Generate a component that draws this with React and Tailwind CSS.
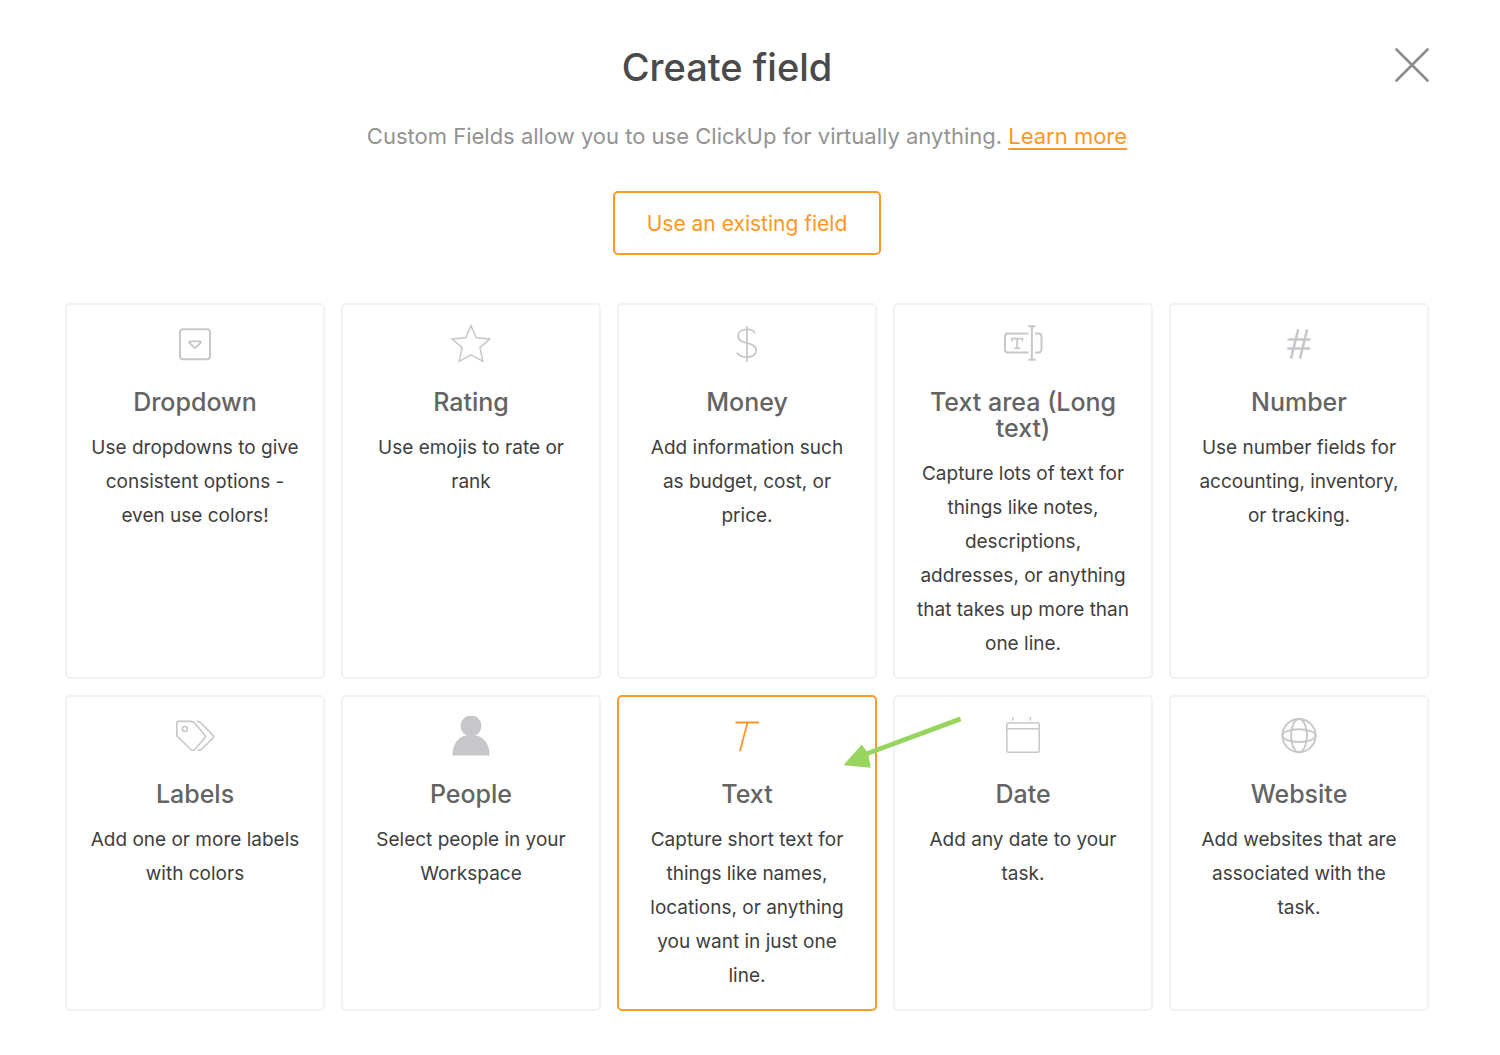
import React, { useState } from 'react'
import clsx from 'clsx'

const Icon = ({ children, strokeWidth = 2 }) => (
  <svg
    className="h-10 w-10"
    viewBox="0 0 40 40"
    fill="none"
    stroke="currentColor"
    strokeWidth={strokeWidth}
    aria-hidden="true"
  >
    {children}
  </svg>
)

const DropdownIcon = () => (
  <Icon>
    <rect x="5" y="5.2" width="30" height="30" rx="3" />
    <path d="M15 17.4h10a.8.8 0 0 1 .5 1.4l-4.3 4.4a1.6 1.6 0 0 1-2.4 0l-4.300-4.400a.8.8 0 0 1 .5-1.400z" strokeWidth="1.9" />
  </Icon>
)

const StarIcon = () => (
  <Icon strokeWidth="1.5">
    <path d="M20 1.800l5.400 12 13.400 1.200-9.900 8.600 2.900 13.800L20 30.800 8.200 37.400l2.900-13.800L1.200 15l13.400-1.200z" />
  </Icon>
)

const MoneyIcon = () => (
  <Icon strokeWidth="1.700">
    <path d="M20 2.800v34.500" strokeLinecap="round" />
    <path
      d="M27.800 8.600C26.200 6.400 23.600 5.400 20 5.400c-5.200 0-8.800 2.600-8.800 6.600 0 4.600 3.800 5.800 8.800 7 5.200 1.300 9.200 2.800 9.200 7.400 0 4-3.800 6.800-9.200 6.800-4.400 0-7.600-1.400-9.600-4"
      strokeLinecap="round"
    />
  </Icon>
)

const TextAreaIcon = () => (
  <Icon>
    <path d="M25.500 9.600H5a3 3 0 0 0-3 3v13a3 3 0 0 0 3 3h20.500M32 9.600h3.500a3 3 0 0 1 3 3v13a3 3 0 0 1-3 3H32" />
    <path d="M25.300 2.200h7.200M28.900 2.200v33.600M25.300 35.800h7.200" />
    <path d="M9 17.200v-2.600h10.400v2.600M14.200 14.600v9.600M11.200 24.400h6" strokeWidth="1.800" />
  </Icon>
)

const NumberIcon = () => (
  <Icon strokeWidth="2.500">
    <path d="M19.200 5.400L12 34.600M28.200 5.400L21 34.600M8.600 15.600h22.800M8.200 24.400h22.800" />
  </Icon>
)

const LabelsIcon = () => (
  <Icon strokeWidth="1.600">
    <path d="M3.200 5.400h13.200a4 4 0 0 1 3 1.400L30 19.200a2 2 0 0 1 0 2.600L20 33.200a3 3 0 0 1-4.400 0L1.800 20V6.800a1.400 1.400 0 0 1 1.400-1.400z" />
    <circle cx="9.800" cy="13" r="2.500" />
    <path d="M21.800 5.400c2 0 3.200.4 4.200 1.600l12 12.400a2 2 0 0 1 0 2.600L27 33c-1.400 1.200-2.800 1.600-4.400 1.200" />
  </Icon>
)

const PeopleIcon = () => (
  <Icon>
    <g fill="currentColor" stroke="none">
      <circle cx="20" cy="10" r="10.500" />
      <path d="M1.400 39.400c0-10 5-17.600 12.200-19.600h12.800c7.200 2 12.200 9.600 12.200 19.600z" />
    </g>
  </Icon>
)

const TextIcon = () => (
  <Icon strokeWidth="1.800">
    <path d="M8.500 6.500h23.500M20.500 6.500L13 35" />
  </Icon>
)

const DateIcon = () => (
  <Icon strokeWidth="1.500">
    <rect x="3.800" y="7" width="32.400" height="29.200" rx="1.500" />
    <path d="M3.800 12.800h32.400M9.800 1v3.400M27.400 1v3.400" />
  </Icon>
)

const WebsiteIcon = () => (
  <Icon strokeWidth="1.900">
    <circle cx="20" cy="19.600" r="16.600" />
    <ellipse cx="20" cy="19.600" rx="8" ry="16.600" />
    <ellipse cx="20" cy="19.600" rx="16.600" ry="6.400" />
  </Icon>
)

const FIELD_TYPES = [
  { id: 'dropdown', name: 'Dropdown', icon: DropdownIcon, text: 'Use dropdowns to give consistent options - even use colors!' },
  { id: 'rating', name: 'Rating', icon: StarIcon, text: 'Use emojis to rate or rank' },
  { id: 'money', name: 'Money', icon: MoneyIcon, text: 'Add information such as budget, cost, or price.' },
  { id: 'textarea', name: 'Text area (Long text)', icon: TextAreaIcon, text: 'Capture lots of text for things like notes, descriptions, addresses, or anything that takes up more than one line.' },
  { id: 'number', name: 'Number', icon: NumberIcon, text: 'Use number fields for accounting, inventory, or tracking.' },
  { id: 'labels', name: 'Labels', icon: LabelsIcon, text: 'Add one or more labels with colors' },
  { id: 'people', name: 'People', icon: PeopleIcon, text: 'Select people in your Workspace' },
  { id: 'text', name: 'Text', icon: TextIcon, text: 'Capture short text for things like names, locations, or anything you want in just one line.' },
  { id: 'date', name: 'Date', icon: DateIcon, text: 'Add any date to your task.' },
  { id: 'website', name: 'Website', icon: WebsiteIcon, text: 'Add websites that are associated with the task.' }
]

const PointerArrow = () => (
  <svg
    className="pointer-events-none absolute -right-[88px] top-4 z-10 h-[60px] w-[124px]"
    viewBox="0 0 124 60"
    fill="#97d55f"
    aria-hidden="true"
  >
    <path d="M118.800 5.400l1.600 4.800L27.600 44.600l2.200 12.200L2.400 54.200 20.800 33.600l4.800 6.600z" />
  </svg>
)

const FieldCard = ({ field, selected, onSelect }) => {
  const FieldIcon = field.icon

  return (
    <div className="relative flex">
      <button
        type="button"
        onClick={() => onSelect(field.id)}
        aria-pressed={selected}
        className={clsx(
          'flex w-full flex-col items-center rounded-[5px] border-2 px-5 pt-[19px] pb-4 text-center',
          selected ? 'border-[#fd9a26]' : 'border-[#f2f2f2]'
        )}
      >
        <span className={selected ? 'text-[#fd9721]' : 'text-[#c7c6ca]'}>
          <FieldIcon />
        </span>
        <span className="mt-[25px] text-[25px] leading-[26px] font-medium text-[#646464]">{field.name}</span>
        <span className="mt-4 text-[19px] leading-[34px] text-[#3e3e3e]">{field.text}</span>
      </button>
      {selected && <PointerArrow />}
    </div>
  )
}

const App = () => {
  const [selected, setSelected] = useState('text')

  return (
    <main className="min-h-screen bg-white pt-10 pr-[71px] pb-11 pl-[65px] font-['Inter',sans-serif]">
      <header className="flex items-start">
        <h1 className="flex-1 text-center text-[38px] leading-[54px] font-medium text-[#4a4a4a]">Create field</h1>
        <button type="button" aria-label="Close" className="mt-2 flex w-10 justify-end text-[#8e8e8e]">
          <svg
            className="h-[34px] w-[34px]"
            viewBox="0 0 34 34"
            fill="none"
            stroke="currentColor"
            strokeWidth="2.8"
            strokeLinecap="round"
            aria-hidden="true"
          >
            <path d="M1.500 1.500l31 31M32.500 1.500l-31 31" />
          </svg>
        </button>
      </header>

      <p className="mt-[26px] text-center text-[22px] leading-8 text-[#939393]">
        Custom Fields allow you to use ClickUp for virtually anything.{' '}
        <a href="#learn-more" className="text-[#fd9721] underline decoration-2 underline-offset-4">Learn more</a>
      </p>

      <div className="mt-[39px] flex justify-center">
        <button
          type="button"
          className="h-16 rounded-[5px] border-2 border-[#fd9a26] px-8 pt-0.5 text-[21px] text-[#fd9721]"
        >
          Use an existing field
        </button>
      </div>

      <section aria-label="Field types" className="mt-12 grid grid-cols-5 gap-4">
        {FIELD_TYPES.map(field => (
          <FieldCard
            key={field.id}
            field={field}
            selected={selected === field.id}
            onSelect={setSelected}
          />
        ))}
      </section>
    </main>
  )
}

export default App
